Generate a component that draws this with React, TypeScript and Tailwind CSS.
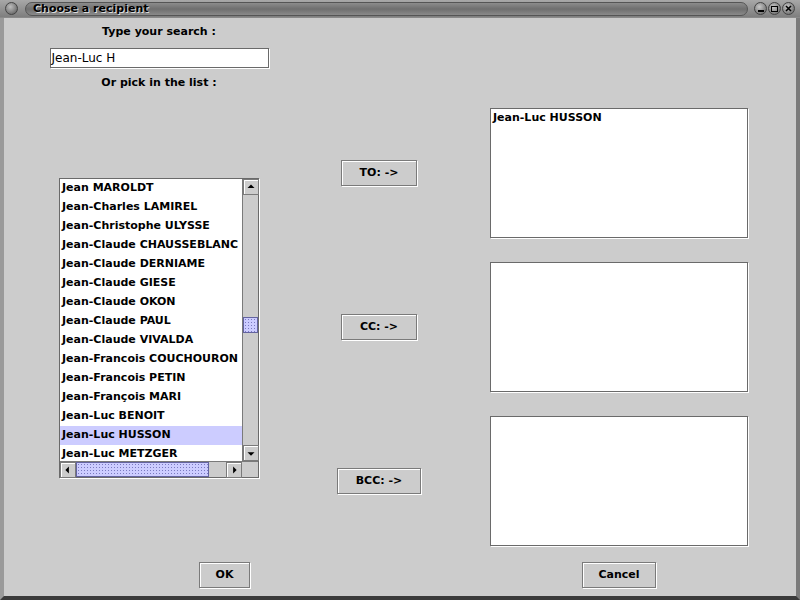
import React from 'react';

const names = [
  'Jean MAROLDT',
  'Jean-Charles LAMIREL',
  'Jean-Christophe ULYSSE',
  'Jean-Claude CHAUSSEBLANC',
  'Jean-Claude DERNIAME',
  'Jean-Claude GIESE',
  'Jean-Claude OKON',
  'Jean-Claude PAUL',
  'Jean-Claude VIVALDA',
  'Jean-Francois COUCHOURON',
  'Jean-Francois PETIN',
  'Jean-François MARI',
  'Jean-Luc BENOIT',
  'Jean-Luc HUSSON',
  'Jean-Luc METZGER',
];

const font = "font-['DejaVu_Sans',sans-serif]";

function Arrow({ dir }: { dir: 'up' | 'down' | 'left' | 'right' }) {
  const pts = {
    up: '4,9 8,5 12,9',
    down: '4,7 8,11 12,7',
    left: '9,4 5,8 9,12',
    right: '7,4 11,8 7,12',
  }[dir];
  return (
    <div className="w-[16px] h-[16px] bg-[#cccccc] border border-[#7a7a7a] shadow-[inset_1px_1px_0_#fff] flex items-center justify-center">
      <svg width="16" height="16" viewBox="0 0 16 16">
        <polygon points={pts} fill="#000" />
      </svg>
    </div>
  );
}

function EtchedButton({ label, w }: { label: string; w: string }) {
  return (
    <button
      className={`${w} h-[26px] bg-[#cccccc] border border-[#7a7a7a] shadow-[inset_1px_1px_0_#fff,1px_1px_0_#fff] text-[11px] font-bold text-black ${font} flex items-center justify-center`}
    >
      {label}
    </button>
  );
}

function TitleButton({ children }: { children: React.ReactNode }) {
  return (
    <div className="w-[13px] h-[13px] rounded-full bg-[radial-gradient(circle_at_40%_35%,#c8c8c8,#5a5a5a)] border border-[#444] flex items-center justify-center">
      {children}
    </div>
  );
}

export default function App() {
  return (
    <div className="w-[800px] h-[600px] flex flex-col bg-[#cccccc] overflow-hidden">
      {/* Title bar */}
      <div className="h-[18px] flex items-center bg-[linear-gradient(#a8a8a8,#7e7e7e)] border-b border-[#8a8a8a]">
        <div className="ml-[5px] w-[13px] h-[13px] rounded-full bg-[radial-gradient(circle_at_40%_35%,#bdbdbd,#555)] border border-[#444]" />
        <div className="ml-[7px] w-[723px] h-[14px] rounded-full bg-[linear-gradient(#8c8c8c,#6f6f6f,#8a8a8a)] border border-[#555] flex items-center pl-[7px]">
          <span className={`text-[11px] font-bold text-black leading-none ${font} [text-shadow:1px_1px_0_#ddd]`}>
            Choose a recipient
          </span>
        </div>
        <div className="ml-[6px] flex gap-[1px]">
          <TitleButton>
            <div className="w-[6px] h-[2px] bg-black mt-[4px]" />
          </TitleButton>
          <TitleButton>
            <div className="w-[7px] h-[6px] border border-black" />
          </TitleButton>
          <TitleButton>
            <svg width="7" height="7" viewBox="0 0 7 7">
              <path d="M1 1L6 6M6 1L1 6" stroke="#000" strokeWidth="1.6" />
            </svg>
          </TitleButton>
        </div>
      </div>

      {/* Body with frame */}
      <div className="flex-1 flex border-l-[4px] border-l-[#9a9a9a] border-r-[4px] border-r-[#7a7a7a] border-b-[4px] border-b-[#3a3a3a]">
        <div className="flex-1 flex flex-col">
          <div className="flex">
            {/* Left column */}
            <div className={`w-[310px] flex flex-col items-center ${font}`}>
              <div className="mt-[6px] h-[16px] leading-[16px] text-[11px] font-bold text-black">Type your search :</div>
              <div className="mt-[8px] w-[219px] h-[20px] bg-white border border-[#6a6a6a] shadow-[1px_1px_0_#fff] px-[1px] text-[12px] leading-[18px] text-black">
                Jean-Luc H
              </div>
              <div className="mt-[7px] h-[16px] leading-[16px] text-[11px] font-bold text-black">Or pick in the list :</div>

              {/* List */}
              <div className="mt-[87px] w-[200px] h-[300px] border border-[#6a6a6a] shadow-[1px_1px_0_#fff] flex flex-col">
                <div className="flex h-[282px]">
                  <div className="w-[183px] bg-white overflow-hidden">
                    {names.map((n) => (
                      <div
                        key={n}
                        className={`h-[19px] leading-[18px] pl-[2px] text-[11px] font-bold text-black whitespace-nowrap ${
                          n === 'Jean-Luc HUSSON' ? 'bg-[#ccccff]' : ''
                        }`}
                      >
                        {n}
                      </div>
                    ))}
                  </div>
                  <div className="w-[16px] flex flex-col bg-[#cccccc] border-l border-[#7a7a7a]">
                    <Arrow dir="up" />
                    <div className="flex-1 flex flex-col">
                      <div className="h-[122px]" />
                      <div className="h-[16px] bg-[#ccccff] border border-[#6363a0] bg-[radial-gradient(#7a7ac0_0.6px,transparent_0.8px)] bg-[length:3px_3px]" />
                    </div>
                    <Arrow dir="down" />
                  </div>
                </div>
                <div className="flex h-[16px] border-t border-[#7a7a7a]">
                  <Arrow dir="left" />
                  <div className="w-[150px] flex bg-[#cccccc]">
                    <div className="w-[133px] h-full bg-[#ccccff] border border-[#6363a0] bg-[radial-gradient(#7a7ac0_0.6px,transparent_0.8px)] bg-[length:3px_3px]" />
                  </div>
                  <Arrow dir="right" />
                  <div className="flex-1 bg-[#cccccc]" />
                </div>
              </div>
            </div>

            {/* Right side: buttons + boxes */}
            <div className="flex flex-col pt-[90px] gap-[24px]">
              <div className="flex items-center">
                <div className="w-[130px] flex justify-center">
                  <EtchedButton label="TO: ->" w="w-[76px]" />
                </div>
                <div className={`ml-[46px] w-[258px] h-[130px] bg-white border border-[#6a6a6a] shadow-[1px_1px_0_#fff] px-[2px] pt-[1px] text-[11px] font-bold text-black ${font}`}>
                  Jean-Luc HUSSON
                </div>
              </div>
              <div className="flex items-center">
                <div className="w-[130px] flex justify-center">
                  <EtchedButton label="CC: ->" w="w-[76px]" />
                </div>
                <div className="ml-[46px] w-[258px] h-[130px] bg-white border border-[#6a6a6a] shadow-[1px_1px_0_#fff]" />
              </div>
              <div className="flex items-center">
                <div className="w-[130px] flex justify-center">
                  <EtchedButton label="BCC: ->" w="w-[84px]" />
                </div>
                <div className="ml-[46px] w-[258px] h-[130px] bg-white border border-[#6a6a6a] shadow-[1px_1px_0_#fff]" />
              </div>
            </div>
          </div>

          {/* Footer */}
          <div className="flex mt-[16px]">
            <div className="ml-[195px]">
              <EtchedButton label="OK" w="w-[51px]" />
            </div>
            <div className="ml-[332px]">
              <EtchedButton label="Cancel" w="w-[74px]" />
            </div>
          </div>
        </div>
      </div>
    </div>
  );
}
